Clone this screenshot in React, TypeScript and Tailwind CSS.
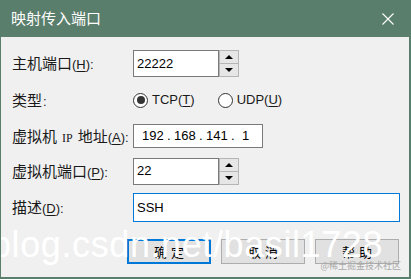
import React from "react";

const CJK = "font-['Noto_Sans_CJK_SC','Liberation_Sans',sans-serif]";
const LAT = "font-['Liberation_Sans','Noto_Sans_CJK_SC',sans-serif]";

function FieldLabel({ text, hotkey, ip }: { text: string; hotkey?: string; ip?: boolean }) {
  return (
    <div className="pl-[11px] flex items-baseline text-[#1a1a1a] whitespace-nowrap">
      {ip ? (
        <>
          <span className={`text-[15px] ${CJK}`}>虚拟机</span>
          <span className="text-[12px] mx-[5px] font-['Liberation_Serif',serif]">IP</span>
          <span className={`text-[15px] ${CJK}`}>地址</span>
        </>
      ) : (
        <span className={`text-[15px] ${CJK}`}>{text}</span>
      )}
      {hotkey ? (
        <span className={`text-[13px] ${LAT}`}>
          (<span className="underline underline-offset-[2px]">{hotkey}</span>):
        </span>
      ) : (
        <span className={`text-[13px] ml-[1px] ${LAT}`}>:</span>
      )}
    </div>
  );
}

function Spinner() {
  return (
    <div className="w-[20px] h-[27px] flex flex-col border border-[#b5b5b5] bg-[#e6e6e6]">
      <div className="flex-1 flex items-center justify-center border-b border-[#b5b5b5]">
        <span className="w-0 h-0 border-x-[4px] border-x-transparent border-b-[4px] border-b-black" />
      </div>
      <div className="flex-1 flex items-center justify-center">
        <span className="w-0 h-0 border-x-[4px] border-x-transparent border-t-[4px] border-t-black" />
      </div>
    </div>
  );
}

function NumberBox({ value }: { value: string }) {
  return (
    <div className="flex h-[27px]">
      <div className={`w-[86px] h-full border border-[#7a7a7a] bg-white flex items-center pl-[3px] text-[13px] text-black ${LAT}`}>
        {value}
      </div>
      <Spinner />
    </div>
  );
}

function Radio({ checked, label, hotkey }: { checked?: boolean; label: string; hotkey: string }) {
  return (
    <div className="flex items-center gap-[4px]">
      <span className="w-[15px] h-[15px] rounded-full border border-[#333] bg-white flex items-center justify-center">
        {checked && <span className="w-[8px] h-[8px] rounded-full bg-[#333]" />}
      </span>
      <span className={`text-[13px] text-[#1a1a1a] ${LAT}`}>
        {label}(<span className="underline underline-offset-[2px]">{hotkey}</span>)
      </span>
    </div>
  );
}

function DialogButton({ label, primary }: { label: string; primary?: boolean }) {
  return (
    <button
      className={`w-[84px] h-[25px] bg-[#e1e1e1] flex items-center justify-center text-[13px] tracking-[4px] pl-[4px] text-black ${CJK} ${
        primary ? "border-2 border-[#0078d7]" : "border border-[#adadad]"
      }`}
    >
      {label}
    </button>
  );
}

export default function App() {
  const ipParts = ["192", "168", "141"];
  return (
    <div className="relative w-[411px] h-[279px] overflow-hidden bg-[#f0f0f0] border-l border-r-2 border-b-2 border-[#5a7e6c]">
      <div className="h-[37px] bg-[#5a7e6c] flex items-center justify-between pl-[10px] pr-[14px]">
        <span className={`text-[15px] text-white ${CJK}`}>映射传入端口</span>
        <svg width="12" height="12" viewBox="0 0 12 12" className="mr-[1px]">
          <path d="M0.5 0.5L11.5 11.5M11.5 0.5L0.5 11.5" stroke="#fff" strokeWidth="1.1" fill="none" />
        </svg>
      </div>

      <div className="grid grid-cols-[132px_1fr] items-center pt-[13px]">
        <div className="h-[27px] flex items-center">
          <FieldLabel text="主机端口" hotkey="H" />
        </div>
        <NumberBox value="22222" />

        <div className="h-[26px] mt-[10px] flex items-center">
          <FieldLabel text="类型" />
        </div>
        <div className="h-[26px] mt-[10px] flex items-center gap-[23px]">
          <Radio checked label="TCP" hotkey="T" />
          <Radio label="UDP" hotkey="U" />
        </div>

        <div className="h-[24px] mt-[11px] flex items-center">
          <FieldLabel text="" hotkey="A" ip />
        </div>
        <div className={`mt-[11px] w-[130px] h-[24px] border border-[#7a7a7a] bg-white flex items-center pl-[8px] text-[13px] text-black ${LAT}`}>
          {ipParts.map((p) => (
            <React.Fragment key={p}>
              <span className="w-[22px]">{p}</span>
              <span className="w-[10px] pl-[3px]">.</span>
            </React.Fragment>
          ))}
          <span className="pl-[4px]">1</span>
        </div>

        <div className="h-[28px] mt-[9px] flex items-center">
          <FieldLabel text="虚拟机端口" hotkey="P" />
        </div>
        <div className="mt-[9px]">
          <NumberBox value="22" />
        </div>

        <div className="h-[29px] mt-[8px] flex items-center">
          <FieldLabel text="描述" hotkey="D" />
        </div>
        <div className={`mt-[8px] w-[267px] h-[29px] border border-[#0078d7] bg-white flex items-center pl-[3px] text-[13px] text-black ${LAT}`}>
          SSH
        </div>
      </div>

      <div className="flex justify-end gap-[10px] pr-[10px] mt-[17px]">
        <DialogButton label="确定" primary />
        <DialogButton label="取消" />
        <DialogButton label="帮助" />
      </div>

      <div className={`absolute left-[-10px] top-[227px] text-[36px] leading-none tracking-[0.6px] text-white whitespace-nowrap pointer-events-none ${LAT}`}>
        blog.csdn.net/basil1728
      </div>
      <div className={`absolute right-[8px] bottom-[7px] text-[9px] leading-none text-[#a8a8a8] whitespace-nowrap ${CJK}`}>
        @稀土掘金技术社区
      </div>
    </div>
  );
}
